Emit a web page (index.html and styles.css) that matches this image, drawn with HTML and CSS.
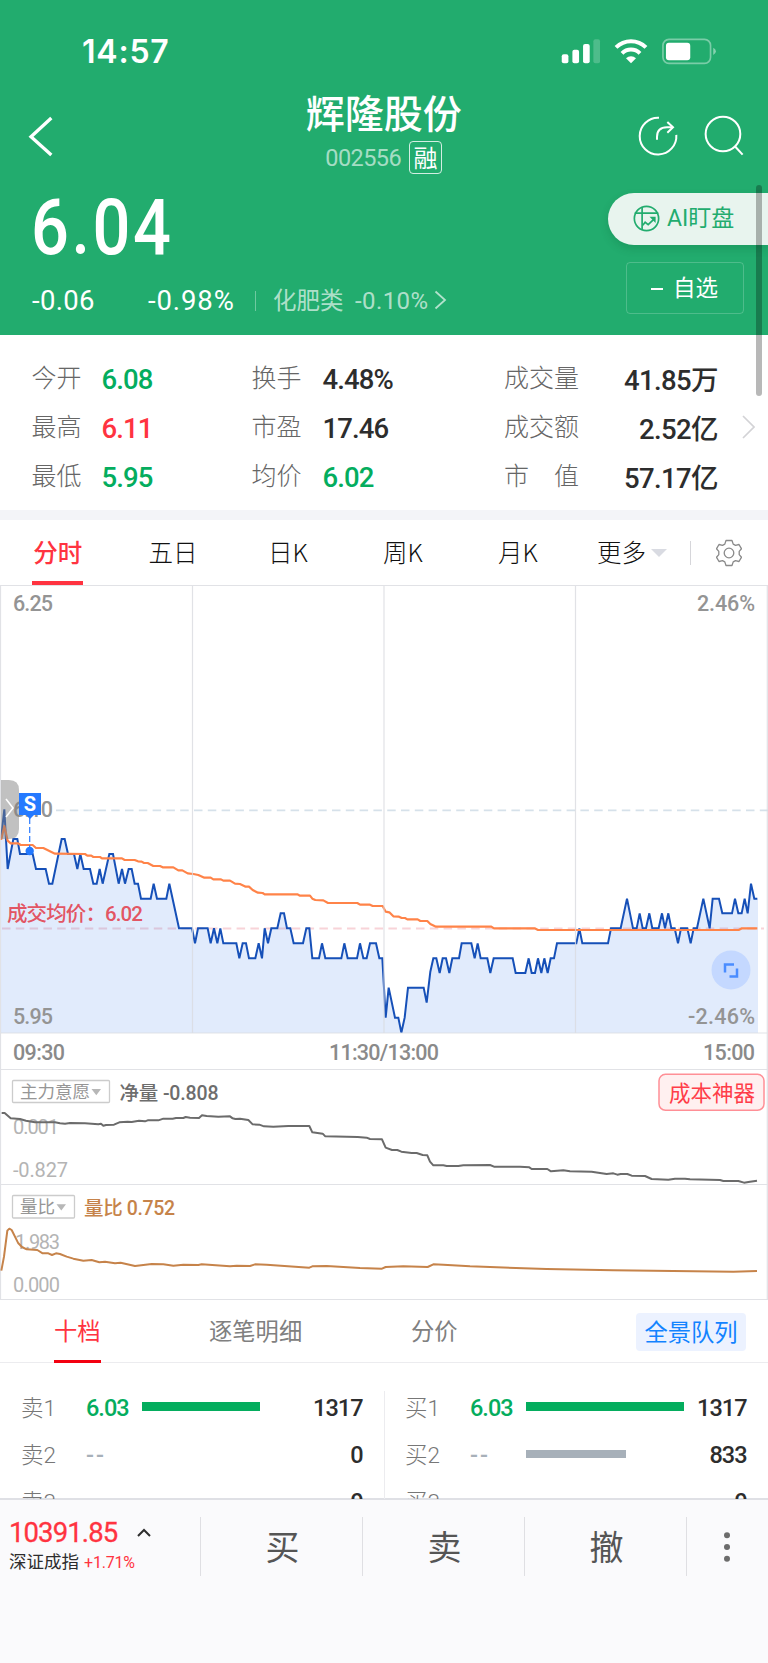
FILE: index.html
```html
<!DOCTYPE html>
<html lang="zh-CN">
<head>
<meta charset="utf-8">
<title>辉隆股份 002556</title>
<link rel="stylesheet" href="styles.css">
</head>
<body>
<div class="screen">
  <div class="scroll-thumb"></div>
  <header class="hero">
    <div class="status-bar">
      <span class="clock">14:57</span>
      <svg class="status-icons" viewBox="540 110 475 85">
        <g fill="#fff">
          <rect x="545" y="162" width="20" height="27" rx="6"/>
          <rect x="577" y="148" width="20" height="41" rx="6"/>
          <rect x="609" y="131" width="20" height="58" rx="6"/>
          <rect x="640" y="117" width="20" height="72" rx="6" opacity=".2"/>
          <path d="M753 189l-15-15a22 22 0 0 1 30 0z"/>
          <rect x="858" y="127" width="73" height="53" rx="9"/>
          <path d="M1000 142q8 3 8 11t-8 11z" opacity=".45"/>
        </g>
        <g fill="none" stroke="#fff" stroke-width="12">
          <path d="M708 141a64 64 0 0 1 90 0"/>
          <path d="M726 159a38 38 0 0 1 54 0"/>
        </g>
        <rect x="849" y="117" width="143" height="72" rx="18" fill="none" stroke="#fff" stroke-width="5" opacity=".4"/>
      </svg>
    </div>
    <div class="nav">
      <svg class="back" viewBox="80 345 80 130"><path d="M153 354L92 410l61 55" fill="none" stroke="#fff" stroke-width="10"/></svg>
      <div class="title">
        <h1>辉隆股份</h1>
        <div class="code"><span>002556</span><span class="margin-tag">融</span></div>
      </div>
      <svg class="nav-icons" viewBox="770 345 325 125">
        <g fill="none" stroke="#fff" stroke-width="6">
          <path d="M836 353.500a55 55 0 1 0 52 51"/>
          <path d="M830 419v-8q0-29 30-29h17"/>
          <path d="M861 366l17 16-17 16"/>
          <circle cx="1028" cy="402" r="52"/>
          <path d="M1063 438l24 26"/>
        </g>
      </svg>
    </div>
    <div class="quote">
      <div class="quote-main">
        <div class="price">6.04</div>
        <div class="change">
          <span class="diff">-0.06</span><span class="pct">-0.98%</span><i></i>
          <span class="sector">化肥类</span><span class="sector-pct">-0.10%</span>
          <svg viewBox="0 0 13 20"><path d="M1.500 1.500L11 10l-9.500 8.500" fill="none" stroke="#fff" stroke-width="1.800" opacity=".65"/></svg>
        </div>
      </div>
      <div class="quote-side">
        <div class="ai">
          <svg viewBox="758 616 80 80"><g fill="none" stroke="#22ac6e" stroke-width="5"><circle cx="798" cy="656" r="36"/><path d="M785 622v68M763 640h70M787 676l7-9 9 7 18-17"/></g><path d="M807 651h18v18z" fill="#22ac6e"/></svg>
          <span>AI盯盘</span>
        </div>
        <div class="watch"><i></i><span>自选</span></div>
      </div>
    </div>
  </header>

  <section class="stats">
    <span>今开</span><b class="down">6.08</b><span>换手</span><b>4.48%</b><span>成交量</span><b class="end">41.85万</b>
    <span>最高</span><b class="up">6.11</b><span>市盈</span><b>17.46</b><span>成交额</span><b class="end">2.52亿</b>
    <span>最低</span><b class="down">5.95</b><span>均价</span><b class="down">6.02</b><span>市　值</span><b class="end">57.17亿</b>
    <svg class="more" viewBox="0 0 13 24"><path d="M1 1l11 11L1 23" fill="none" stroke="#d3d3d6" stroke-width="1.700"/></svg>
  </section>

  <nav class="periods">
    <span class="active"><em>分时</em></span><span>五日</span><span>日K</span><span>周K</span><span>月K</span>
    <span class="more-tab">更多<i></i></span>
    <svg viewBox="0 0 26 28"><path d="M10 1.500h6l1.200 3.600 2.300 1.300 3.500-.9 2.500 4.300-2.300 2.600v3.200l2.300 2.600-2.500 4.300-3.500-.9-2.300 1.300-1.200 3.600h-6l-1.200-3.600-2.300-1.300-3.500.9L.500 18.200l2.300-2.600v-3.200L.500 9.800 3 5.500l3.500.9 2.300-1.300z" fill="none" stroke="#8a8a8a" stroke-width="1.300" stroke-linejoin="round"/><circle cx="13" cy="14" r="4.800" fill="none" stroke="#8a8a8a" stroke-width="1.300"/></svg>
  </nav>

  <svg class="chart" viewBox="0 585 768 715">
    <g class="axis">
      <text x="13" y="611" textLength="40">6.25</text>
      <text x="755" y="611" textLength="58" text-anchor="end">2.46%</text>
      <text x="13" y="817" textLength="40">6.10</text>
    </g>
    <path d="M56 810.300H768" stroke="#d6e1ea" stroke-width="1.800" stroke-dasharray="8.500 5.300"/>
    <path d="M2 928.500H764" stroke="#f8d3d8" stroke-width="1.800" stroke-dasharray="8.500 5.300"/>
    <g transform="translate(0 770) scale(.33333)" fill="none" stroke-linejoin="round">
      <path fill="#4d87f0" fill-opacity=".17" d="M3 207L13 118 23 297 40 207H52L60 252H98L108 297H137L147 341H157L185 207H194L204 252H222L232 297 241 252 251 297H270L280 341H290L299 297 308 341 328 252H339L356 341 366 297 375 341 386 297H395L404 341H414L423 386H452L461 341 471 386H499L508 341 537 475H576L585 520 594 475H623L632 520 642 475 652 520 661 475 670 520H709L718 565 728 520H738L747 565H766L776 520 786 565 794 475 804 520 814 475H832L842 430H852L861 475H871L881 520H909L919 475H928L937 565H957L966 520 976 565H1024L1033 520 1043 565H1071L1080 520 1090 565H1100L1110 520H1128L1138 565H1147L1157 743 1166 653 1185 743H1195L1204 788 1214 743 1224 653H1271L1280 698 1291 605 1300 565H1309L1319 609 1328 565H1338L1348 609 1357 565H1377L1385 520H1414L1424 565 1433 520 1442 565H1462L1471 609 1481 565H1538L1547 609H1576L1586 565 1595 609H1605L1614 565 1624 609 1633 565 1643 609 1652 565H1662L1671 520H1729L1738 475 1747 520H1824L1833 475H1862L1881 386 1899 475H1910L1919 430 1928 475H1938L1948 430 1957 475H1976L1986 430 1995 475 2005 430 2014 475H2024L2034 520 2043 475H2062L2072 520 2081 475H2091L2110 386 2129 475 2138 386H2157L2167 430H2196L2205 386 2215 430H2225L2234 386 2243 430 2253 341 2263 386H2274V789H3z"/>
      <path stroke="#1650b8" stroke-width="6" stroke-linejoin="miter" d="M3 207L13 118 23 297 40 207H52L60 252H98L108 297H137L147 341H157L185 207H194L204 252H222L232 297 241 252 251 297H270L280 341H290L299 297 308 341 328 252H339L356 341 366 297 375 341 386 297H395L404 341H414L423 386H452L461 341 471 386H499L508 341 537 475H576L585 520 594 475H623L632 520 642 475 652 520 661 475 670 520H709L718 565 728 520H738L747 565H766L776 520 786 565 794 475 804 520 814 475H832L842 430H852L861 475H871L881 520H909L919 475H928L937 565H957L966 520 976 565H1024L1033 520 1043 565H1071L1080 520 1090 565H1100L1110 520H1128L1138 565H1147L1157 743 1166 653 1185 743H1195L1204 788 1214 743 1224 653H1271L1280 698 1291 605 1300 565H1309L1319 609 1328 565H1338L1348 609 1357 565H1377L1385 520H1414L1424 565 1433 520 1442 565H1462L1471 609 1481 565H1538L1547 609H1576L1586 565 1595 609H1605L1614 565 1624 609 1633 565 1643 609 1652 565H1662L1671 520H1729L1738 475 1747 520H1824L1833 475H1862L1881 386 1899 475H1910L1919 430 1928 475H1938L1948 430 1957 475H1976L1986 430 1995 475 2005 430 2014 475H2024L2034 520 2043 475H2062L2072 520 2081 475H2091L2110 386 2129 475 2138 386H2157L2167 430H2196L2205 386 2215 430H2225L2234 386 2243 430 2253 341 2263 386H2272"/>
      <path stroke="#ff8348" stroke-width="6.500" d="M0 207H4L13 168 23 212 32 220H55L62 225H98L108 234H130L165 251 255 252 262 257H274L280 261H300L306 265H366L374 270H404L414 274 425 275 432 279H443L460 288H480L488 292H520L535 301H547L563 310 580 312 595 315 613 323H632L640 328H663L670 332H690L705 341 720 342 737 350H747L758 360 774 368 788 369 794 373H892L900 377H930L937 386 946 390 970 391 984 399H1072L1080 404H1110L1118 408H1148L1157 425 1168 427 1180 439 1197 440 1205 444H1215L1222 448H1253L1261 453H1282L1291 462 1308 470H1474L1482 475H1604L1614 480H2216L2226 475H2272"/>
    </g>
    <g fill="none" stroke="#d9dbe0" stroke-opacity=".8" stroke-width="1.200">
      <path d="M0 585.500H768M0 1033H768M0 1069.500H768M0 1184.500H768M0 1299.500H768M.500 585V1299.500M767.300 585V1299.500M192.500 585V1033M384 585V1033M575.500 585V1033"/>
    </g>
    <path class="drawer" d="M1 780h8q10 0 10 10v39q0 10-10 10H1z"/>
    <path d="M6 799l7 9-7 9" fill="none" stroke="#fff" stroke-width="1.600"/>
    <path d="M29.700 818V850" stroke="#2a7bff" stroke-width="1.200" stroke-dasharray="6 3"/>
    <path d="M19 793h22v22h-7l-4 4-4-4h-7z" fill="#2479ff"/>
    <text class="marker" x="30" y="811" text-anchor="middle">S</text>
    <circle cx="29.700" cy="851" r="4.200" fill="#2479ff"/>
    <text class="avg" x="7" y="921" textLength="136">成交均价：6.02</text>
    <g class="axis">
      <text x="13" y="1024" textLength="40">5.95</text>
      <text x="755" y="1024" textLength="67" text-anchor="end">-2.46%</text>
    </g>
    <g class="axis time">
      <text x="13" y="1060" textLength="52">09:30</text>
      <text x="384" y="1060" textLength="110" text-anchor="middle">11:30/13:00</text>
      <text x="755" y="1060" textLength="52" text-anchor="end">15:00</text>
    </g>
    <circle cx="731" cy="970" r="19.500" fill="#c4d8ff"/>
    <path d="M734 964.500h-9v8M737 968.500v8h-7.500" fill="none" stroke="#4a8cff" stroke-width="2.500"/>

    <g class="scale">
      <text x="13" y="1133.500" textLength="46">0.001</text>
      <text x="13" y="1176.500" textLength="55">-0.827</text>
      <text x="15" y="1248.500" textLength="45">1.983</text>
      <text x="13" y="1291.500" textLength="47">0.000</text>
    </g>
    <g fill="none" stroke="#ccc" stroke-width="1.300"><rect x="12.500" y="1080.500" width="97" height="22" rx="1"/><rect x="12.500" y="1195.500" width="62" height="22.500" rx="1"/></g>
    <path d="M91.500 1089h9.500l-4.700 6.300zM56.500 1204.300H66l-4.700 6.300z" fill="#b7b7b7"/>
    <text class="picker" x="20" y="1098" textLength="70">主力意愿</text>
    <text class="picker" x="20" y="1213" textLength="35">量比</text>
    <text class="metric" x="119.500" y="1099.500" textLength="99">净量 -0.808</text>
    <text class="metric ratio" x="84" y="1215" textLength="91">量比 0.752</text>
    <g transform="translate(0 1040) scale(.33333)" fill="none" stroke-width="6" stroke-linejoin="round">
      <path stroke="#6b6b6b" d="M5 219H14L32 235 60 237 78 242 105 247H165L180 250 195 251 210 249 255 250 295 253 303 251 310 257 318 255 342 254 358 247 383 245 395 246 417 242 435 244 443 241H475L490 236H518L528 234H550L557 231 570 233 597 234 606 226 620 228 655 230 690 229 698 235 706 237 720 236 745 240 758 253 778 254 792 259 820 260 865 258H928L937 277 968 281 976 289 1073 291 1100 293 1110 297 1146 298 1157 323 1176 330H1192L1204 335 1235 339H1250L1268 345 1282 346 1290 365 1300 376H1330L1340 378H1375L1390 376 1470 375 1482 380H1560L1588 382 1595 387H1642L1653 394 1690 391 1710 394 1775 395 1820 402 1840 400 1852 404 1862 402H1882L1895 407 1935 408 1955 417 2005 419 2025 416H2055L2070 418 2160 420 2170 423H2215L2232 428 2250 425 2271 422"/>
      <path stroke="#c6834a" d="M4 692L12 650 22 572 28 566 35 570 55 610 66 621 80 628 112 630 128 640H145L156 645 168 640 180 642 200 650 220 656 250 662 275 660 298 667 315 665 345 670 362 668 405 678 455 672 490 673 520 677 550 674 595 675 605 673 690 679 710 677 750 678 765 673 800 674 928 683 937 679 980 678 1080 684 1146 686 1157 681 1210 679 1283 681 1300 673 1330 674 1410 679 1640 687 1840 691 2200 695 2271 693"/>
    </g>
    <rect x="659" y="1074.300" width="105" height="36" rx="6.500" fill="#fff0f0" stroke="#ff8f96" stroke-width="1.500"/>
    <text class="cost" x="669" y="1100.500" textLength="86">成本神器</text>
  </svg>

  <nav class="book-tabs">
    <span class="active"><em>十档</em></span><span>逐笔明细</span><span>分价</span><a>全景队列</a>
  </nav>

  <section class="book">
    <div class="side">
      <div class="row"><span>卖1</span><b class="down">6.03</b><i><u class="down-bar" style="width:118px"></u></i><strong>1317</strong></div>
      <div class="row"><span>卖2</span><b class="none">--</b><i></i><strong>0</strong></div>
      <div class="row"><span>卖3</span><b class="none"></b><i></i><strong>0</strong></div>
    </div>
    <div class="side">
      <div class="row"><span>买1</span><b class="down">6.03</b><i><u class="down-bar" style="width:157.500px"></u></i><strong>1317</strong></div>
      <div class="row"><span>买2</span><b class="none">--</b><i><u style="width:100px"></u></i><strong>833</strong></div>
      <div class="row"><span>买3</span><b class="none"></b><i></i><strong>0</strong></div>
    </div>
  </section>

  <footer class="trade">
    <div class="index">
      <div class="index-value">10391.85<svg viewBox="0 0 14 9"><path d="M1 8l6-6 6 6" fill="none" stroke="#2d2d2d" stroke-width="2"/></svg></div>
      <div class="index-name">深证成指<span>+1.71%</span></div>
    </div>
    <div class="act">买</div><div class="act">卖</div><div class="act">撤</div>
    <div class="act dots"><svg viewBox="0 0 6 30"><g fill="#6c6c6c"><circle cx="3" cy="3.300" r="3"/><circle cx="3" cy="15" r="3"/><circle cx="3" cy="26.700" r="3"/></g></svg></div>
  </footer>
</div>
</body>
</html>
```
FILE: styles.css
```css
* { box-sizing: border-box; }
body { margin: 0; background: #fff; font-family: Roboto, "Noto Sans CJK SC", sans-serif; color: #2d2d2d; }
em, i { font-style: normal; }
svg { display: block; flex: none; }
.screen { position: relative; width: 768px; height: 1663px; overflow: hidden; display: flex; flex-direction: column; }
.screen > * { flex: none; }
.scroll-thumb { position: absolute; z-index: 2; left: 756px; top: 185px; width: 6px; height: 211px; border-radius: 3px; background: rgba(0, 0, 0, .28); }

.hero { height: 335px; background: #22ac6e; color: #fff; display: flex; flex-direction: column; }
.status-bar { height: 90px; padding: 33px 49px 0 82px; display: flex; justify-content: space-between; align-items: flex-start; }
.clock { font: 600 32px/37px Inter, sans-serif; letter-spacing: .8px; }
.status-icons { width: 158.300px; height: 28.300px; margin: 3.700px .7px 0 0; }
.nav { height: 95px; padding: 0 23px 0 27px; display: flex; justify-content: space-between; align-items: flex-start; }
.back { width: 26.700px; height: 43.300px; margin-top: 25px; }
.title { width: 240px; margin-left: 77px; display: flex; flex-direction: column; align-items: center; }
h1 { margin: -3px 0 0; font: 500 39px/48px "Noto Sans CJK SC", sans-serif; height: 48px; }
.code { display: flex; align-items: center; gap: 8px; height: 39px; margin-top: 2.500px; font-size: 23.500px; letter-spacing: -.6px; color: rgba(255, 255, 255, .6); }
.code span:first-child { padding-top: 2px; }
.margin-tag { width: 33px; height: 33px; border: 1.500px solid rgba(255, 255, 255, .8); border-radius: 4px; font: 400 24px/30px "Noto Sans CJK SC", sans-serif; letter-spacing: 0; text-align: center; color: #fff; }
.nav-icons { width: 108.300px; height: 41.700px; margin-top: 25px; }
.quote { flex: 1; display: flex; justify-content: space-between; }
.quote-main { padding-left: 31px; }
.price { height: 84px; font-size: 78px; line-height: 86px; font-weight: 500; letter-spacing: 3px; transform: scaleX(.855); transform-origin: 0 0; }
.change { display: flex; align-items: center; height: 63px; padding-left: 1px; font-size: 27.500px; letter-spacing: .3px; }
.diff { width: 116px; }
.pct { width: 107px; letter-spacing: .9px; }
.change i { width: 1px; height: 20px; background: rgba(255, 255, 255, .35); margin-right: 17px; }
.sector { font-size: 23.500px; width: 82px; margin-top: -3px; letter-spacing: 0; color: rgba(255, 255, 255, .65); }
.sector-pct { font-size: 24px; width: 79px; letter-spacing: .4px; color: rgba(255, 255, 255, .65); }
.change svg { width: 13px; height: 20px; margin: -2px 0 0; }
.quote-side { width: 160px; padding-top: 8px; }
.ai { height: 51.500px; border-radius: 26px 0 0 26px; background: #e8f4ee; box-shadow: 0 4px 8px rgba(0, 80, 40, .18); display: flex; align-items: center; gap: 7px; padding-left: 25px; font-size: 23px; line-height: 46px; color: #22ac6e; }
.ai span { margin-top: 1px; }
.ai svg { width: 27px; height: 27px; }
.watch { width: 118px; height: 51.500px; margin: 17.500px 0 0 18px; border: 1px solid rgba(255, 255, 255, .2); border-radius: 4px; display: flex; align-items: center; gap: 10px; padding-left: 24px; font-size: 22.500px; }
.watch span { margin-top: -4px; }
.watch i { width: 12px; height: 2px; margin-top: 2px; background: #fff; }

.stats { position: relative; height: 175px; padding: 17.500px 50px 0 31.500px; display: grid; grid-template-columns: 70px 150px 71px 181.500px 80px 1fr; grid-auto-rows: 49px; align-items: center; }
.stats span { font: 300 25px/46px "Noto Sans CJK SC", sans-serif; color: #666; white-space: nowrap; margin-top: -2px; }
.stats b { font-size: 27.500px; font-weight: 500; letter-spacing: -.9px; padding-top: 4px; white-space: nowrap; }
.stats .end { text-align: right; letter-spacing: -.6px; padding-top: 1px; }
.stats .more { position: absolute; left: 742px; top: 80px; width: 13px; height: 24px; }
.up { color: #ff3340; }
.down { color: #04ad5e; }

.periods { height: 75px; border-top: 10px solid #f3f4f8; display: grid; grid-template-columns: 115.500px 115px 115px 115px 115px 116px 1fr; align-items: center; text-align: center; font: 300 24.500px/63px "Noto Sans CJK SC", sans-serif; color: #111; }
.periods > span { height: 65px; }
.periods .active { font-weight: 500; color: #ff3340; }
.periods em { display: inline-block; height: 65px; padding: 0 1px; border-bottom: 4px solid #ff3340; }
.more-tab { display: flex; align-items: center; justify-content: flex-start; padding: 0 0 2px 21.500px; }
.more-tab i { margin: 2px 0 0 5px; border: 8px solid transparent; border-top-color: #d9dbe2; border-bottom: 0; }
.periods svg { width: 26px; height: 28px; margin-left: 24px; }
.more-tab::after { content: ""; width: 1px; height: 24px; margin: 2px 1px 0 auto; background: #d6d6da; }
.periods .more-tab { width: 116px; }

.chart { width: 768px; height: 715px; background: #fff; }
.axis text { font-size: 21.500px; fill: #949494; font-weight: 500; }
.axis.time text { fill: #8a8a8a; }
.scale text { font-size: 20px; fill: #b4b4b4; }
.drawer { fill: rgba(125, 125, 125, .48); }
.marker { font: 700 20px Roboto, sans-serif; fill: #fff; }
.avg { font-size: 20.500px; font-weight: 500; fill: #e3414f; fill-opacity: .9; }
.picker { font-size: 17.500px; fill: #969696; }
.metric { font-size: 19.500px; font-weight: 500; fill: #6d6d6d; }
.metric.ratio { fill: #c6834a; }
.cost { font-size: 21.500px; fill: #ff3d49; }

.book-tabs { height: 63px; padding: 0 22px 0 54px; display: flex; border-bottom: 1px solid #ececef; font: 400 23.300px/60px "Noto Sans CJK SC", sans-serif; color: #808080; }
.book-tabs .active { color: #ff3340; width: 155px; }
.book-tabs em { display: inline-block; height: 63px; border-bottom: 3.500px solid #f30010; }
.book-tabs span:nth-child(2) { width: 202px; }
.book-tabs a { margin: 13px 0 0 auto; width: 110px; height: 37.500px; line-height: 36px; text-align: center; background: #ecf2ff; border-radius: 4px; color: #1283ff; }

.book { height: 136px; overflow: hidden; display: grid; grid-template-columns: 384px 384px; padding-top: 21px; }
.side { position: relative; }
.side + .side::before { content: ""; position: absolute; left: 0; top: 7px; bottom: 0; width: 1px; background: #ececef; }
.row { height: 47.400px; display: grid; grid-template-columns: 65px 56px 160px 1fr; padding: 0 21.500px 0 21px; align-items: center; }
.row span { font: 300 22.500px/46px Roboto, "Noto Sans CJK SC", sans-serif; color: #777; }
.row b, .row strong { font-size: 23.500px; font-weight: 500; letter-spacing: -1px; }
.row .none { color: #a7b0b9; letter-spacing: 2px; }
.row strong { text-align: right; }
.row u { display: block; height: 8.500px; background: #a7b0b9; margin-top: -2px; }
.row .down-bar { background: #04ad5e; }

.trade { flex: 1; background: #fafafc; border-top: 2px solid #dfe0e5; margin-top: -1px; display: grid; grid-template-columns: 200px 162px 162px 162px 82px; }
.index { padding: 15px 0 0 9px; }
.index-value { display: flex; align-items: center; height: 34px; font-size: 27.500px; letter-spacing: -.9px; color: #ff3340; -webkit-text-stroke: .3px #ff3340; }
.index-value svg { width: 14px; height: 9px; margin-left: 20px; }
.index-name { height: 26px; line-height: 27px; font-size: 17.500px; white-space: nowrap; }
.index-name span { margin-left: 5px; font-size: 16px; color: #ff3340; letter-spacing: -.2px; }
.act { height: 59px; margin-top: 17px; padding-left: 2px; border-left: 1px solid #dfdfe3; text-align: center; font: 400 34px/57px "Noto Sans CJK SC", sans-serif; color: #555; }
.dots { display: flex; align-items: center; justify-content: center; padding: 0 2px 0 0; }
.dots svg { width: 6px; height: 30px; }
```
